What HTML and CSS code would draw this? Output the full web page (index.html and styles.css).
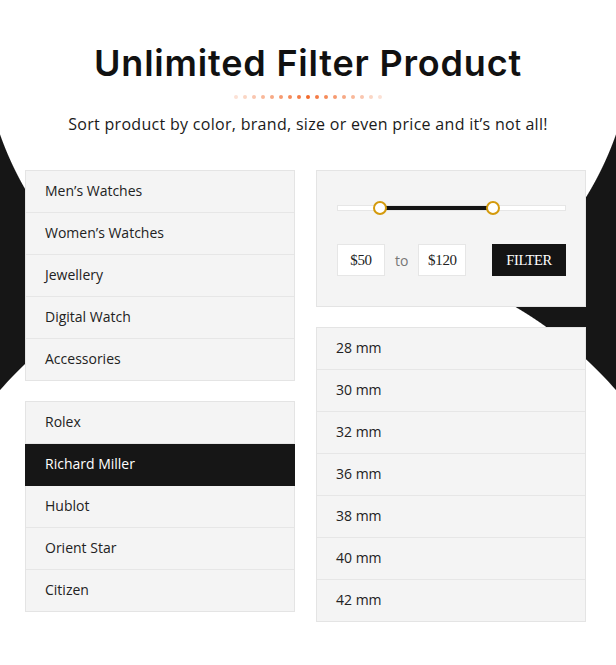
FILE: index.html
```html
<!DOCTYPE html>
<html lang="en">
<head>
<meta charset="utf-8">
<title>Unlimited Filter Product</title>
<link rel="stylesheet" href="styles.css">
</head>
<body>
<main class="page">
  <header class="intro">
    <h1 class="title">Unlimited Filter Product</h1>
    <div class="dots">
      <span class="d8"></span><span class="d7"></span><span class="d6"></span><span class="d5"></span><span class="d4"></span><span class="d3"></span><span class="d2"></span><span class="d1"></span><span class="d0"></span><span class="d1"></span><span class="d2"></span><span class="d3"></span><span class="d4"></span><span class="d5"></span><span class="d6"></span><span class="d7"></span><span class="d8"></span>
    </div>
    <p class="subtitle">Sort product by color, brand, size or even price and it’s not all!</p>
  </header>

  <section class="columns">
    <div class="col">
      <ul class="list">
        <li>Men’s Watches</li>
        <li>Women’s Watches</li>
        <li>Jewellery</li>
        <li>Digital Watch</li>
        <li>Accessories</li>
      </ul>
      <ul class="list">
        <li>Rolex</li>
        <li class="active">Richard Miller</li>
        <li>Hublot</li>
        <li>Orient Star</li>
        <li>Citizen</li>
      </ul>
    </div>
    <div class="col">
      <div class="filter">
        <div class="track">
          <div class="fill" style="left:42px;width:113px"></div>
          <span class="thumb" style="left:42px"></span>
          <span class="thumb" style="left:155px"></span>
        </div>
        <div class="price-row">
          <span class="price">$50</span>
          <span class="to">to</span>
          <span class="price">$120</span>
          <button class="btn">FILTER</button>
        </div>
      </div>
      <ul class="list">
        <li>28 mm</li>
        <li>30 mm</li>
        <li>32 mm</li>
        <li>36 mm</li>
        <li>38 mm</li>
        <li>40 mm</li>
        <li>42 mm</li>
      </ul>
    </div>
  </section>
</main>
</body>
</html>
```

FILE: styles.css
```css
html {
  background:
    radial-gradient(circle 327px at 308px 26px, #ffffff 326px, rgba(255,255,255,0) 327px),
    radial-gradient(circle 410px at 308px 660px, #ffffff 409px, rgba(255,255,255,0) 410px),
    #161616;
  min-height: 100%;
}

body {
  margin: 0;
  font-family: "Open Sans", "Liberation Sans", sans-serif;
  color: #222;
}

.page {
  width: 616px;
  min-height: 665px;
}

.intro {
  display: flex;
  flex-direction: column;
  align-items: center;
  padding-top: 41px;
}

.title {
  margin: 0;
  font-family: Inter, "Open Sans", sans-serif;
  font-weight: 600;
  font-size: 36px;
  line-height: 44px;
  color: #111;
  letter-spacing: 0.8px;
}

.dots {
  display: flex;
  gap: 5px;
  margin-top: 10px;
}

.dots span {
  width: 4px;
  height: 4px;
  border-radius: 50%;
  background: #f26a2c;
}
.dots .d0 { opacity: 1; }
.dots .d1 { opacity: 0.88; }
.dots .d2 { opacity: 0.78; }
.dots .d3 { opacity: 0.68; }
.dots .d4 { opacity: 0.58; }
.dots .d5 { opacity: 0.48; }
.dots .d6 { opacity: 0.38; }
.dots .d7 { opacity: 0.28; }
.dots .d8 { opacity: 0.2; }

.subtitle {
  margin: 15px 0 0;
  font-size: 16px;
  line-height: 20px;
  letter-spacing: 0.3px;
  color: #1a1a1a;
}

.columns {
  display: flex;
  gap: 21px;
  padding-left: 25px;
  margin-top: 36px;
}

.col {
  width: 270px;
  display: flex;
  flex-direction: column;
  gap: 20px;
}

.list {
  list-style: none;
  margin: 0;
  padding: 0;
  background: #f4f4f4;
  border: 1px solid #e4e4e4;
}

.list li {
  height: 41px;
  line-height: 40px;
  padding-left: 19px;
  font-size: 14px;
  color: #222;
  border-bottom: 1px solid #e6e6e6;
}

.list li:last-child {
  border-bottom: 0;
}

.list li.active {
  background: #161616;
  color: #fff;
  margin: 0 -1px;
  padding-left: 20px;
  border-bottom-color: #161616;
}

.filter {
  background: #f4f4f4;
  border: 1px solid #e4e4e4;
  padding: 34px 19px 30px 20px;
}

.track {
  position: relative;
  height: 4px;
  background: #fff;
  border: 1px solid #e6e6e6;
}

.fill {
  position: absolute;
  top: 0;
  height: 4px;
  background: #141414;
}

.thumb {
  position: absolute;
  top: 2px;
  width: 10px;
  height: 10px;
  margin: -7px 0 0 -7px;
  border: 2px solid #d49a0c;
  border-radius: 50%;
  background: #fff;
}

.price-row {
  display: flex;
  align-items: center;
  margin-top: 33px;
  height: 32px;
}

.price {
  width: 46px;
  height: 30px;
  border: 1px solid #e6e6e6;
  background: #fff;
  display: flex;
  align-items: center;
  justify-content: center;
  font-family: "Liberation Serif", serif;
  font-size: 15px;
  letter-spacing: -0.3px;
  color: #222;
}

.to {
  margin: 0 10px;
  font-size: 14px;
  color: #777;
}

.btn {
  margin-left: auto;
  width: 74px;
  height: 32px;
  border: 0;
  padding: 0;
  background: #141414;
  color: #fff;
  font-family: "Liberation Serif", serif;
  font-size: 14.5px;
  letter-spacing: -0.4px;
}
```
